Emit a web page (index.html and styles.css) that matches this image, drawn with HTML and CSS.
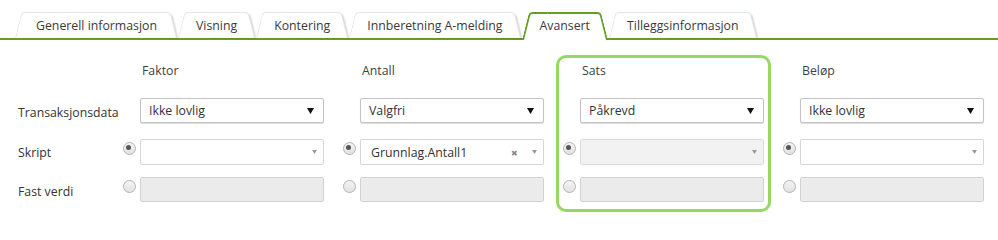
FILE: index.html
```html
<!DOCTYPE html>
<html lang="no">
<head>
<meta charset="utf-8">
<title>Avansert</title>
<link rel="stylesheet" href="styles.css">
</head>
<body>
<div class="tabs">
  <div class="tab">Generell informasjon</div>
  <div class="tab">Visning</div>
  <div class="tab">Kontering</div>
  <div class="tab">Innberetning A-melding</div>
  <div class="tab active">Avansert</div>
  <div class="tab">Tilleggsinformasjon</div>
</div>

<div class="form">
  <div class="labels">
    <div class="head"></div>
    <div class="lbl r1">Transaksjonsdata</div>
    <div class="lbl r2">Skript</div>
    <div class="lbl r3">Fast verdi</div>
  </div>

  <div class="col">
    <div class="head">Faktor</div>
    <div class="row r1"><span class="rspace"></span><div class="dd"><span>Ikke lovlig</span><svg class="caret" viewBox="0 0 7 6" width="7" height="6"><path d="M0 0H7L3.5 6Z"/></svg></div></div>
    <div class="row r2"><span class="radio on"></span><div class="combo"><span></span><svg class="scaret" viewBox="0 0 5 4" width="5" height="4"><path d="M0 0H5L2.5 4Z"/></svg></div></div>
    <div class="row r3"><span class="radio"></span><div class="fixed"></div></div>
  </div>

  <div class="col">
    <div class="head">Antall</div>
    <div class="row r1"><span class="rspace"></span><div class="dd"><span>Valgfri</span><svg class="caret" viewBox="0 0 7 6" width="7" height="6"><path d="M0 0H7L3.5 6Z"/></svg></div></div>
    <div class="row r2"><span class="radio on"></span><div class="combo filled"><span>Grunnlag.Antall1</span><span class="clear">&#x2716;</span><svg class="scaret" viewBox="0 0 5 4" width="5" height="4"><path d="M0 0H5L2.5 4Z"/></svg></div></div>
    <div class="row r3"><span class="radio"></span><div class="fixed"></div></div>
  </div>

  <div class="col highlight">
    <div class="head">Sats</div>
    <div class="row r1"><span class="rspace"></span><div class="dd"><span>Påkrevd</span><svg class="caret" viewBox="0 0 7 6" width="7" height="6"><path d="M0 0H7L3.5 6Z"/></svg></div></div>
    <div class="row r2"><span class="radio on"></span><div class="combo disabled"><span></span><svg class="scaret" viewBox="0 0 5 4" width="5" height="4"><path d="M0 0H5L2.5 4Z"/></svg></div></div>
    <div class="row r3"><span class="radio"></span><div class="fixed"></div></div>
  </div>

  <div class="col">
    <div class="head">Beløp</div>
    <div class="row r1"><span class="rspace"></span><div class="dd"><span>Ikke lovlig</span><svg class="caret" viewBox="0 0 7 6" width="7" height="6"><path d="M0 0H7L3.5 6Z"/></svg></div></div>
    <div class="row r2"><span class="radio on"></span><div class="combo"><span></span><svg class="scaret" viewBox="0 0 5 4" width="5" height="4"><path d="M0 0H5L2.5 4Z"/></svg></div></div>
    <div class="row r3"><span class="radio"></span><div class="fixed"></div></div>
  </div>
</div>
</body>
</html>
```

FILE: styles.css
```css
* { box-sizing: border-box; }

html, body {
  margin: 0;
  padding: 0;
  background: #fff;
}

body {
  font-family: "Open Sans", "Liberation Sans", sans-serif;
  font-size: 12.3px;
  color: #333;
  width: 998px;
  height: 219px;
  overflow: hidden;
}

/* ---------- tabs ---------- */
.tabs {
  display: flex;
  align-items: flex-end;
  gap: 1px;
  padding: 12px 0 0 15px;
  border-bottom: 2px solid #62a024;
}

.tab {
  position: relative;
  z-index: 0;
  flex: none;
  height: 26px;
  padding: 0 18px;
  display: flex;
  align-items: center;
  color: #3a3a3a;
  white-space: nowrap;
}

.tab:first-child { padding: 0 20px 0 21px; }

.tab::before,
.tab::after {
  content: "";
  position: absolute;
  top: 0;
  bottom: 0;
  width: 60%;
  background: #fff;
  border-top: 1px solid #dfe5ec;
  z-index: -1;
}

.tab::before {
  left: 0;
  border-left: 1px solid #dfe5ec;
  border-top-left-radius: 4px;
  transform: skewX(-14deg);
  transform-origin: bottom left;
}

.tab::after {
  right: 0;
  border-right: 1px solid #dfe5ec;
  border-top-right-radius: 4px;
  transform: skewX(14deg);
  transform-origin: bottom right;
  box-shadow: 2px 1px 2px -1px rgba(0, 0, 0, 0.18);
}

.tab.active {
  height: 28px;
  margin-bottom: -2px;
  padding-bottom: 2px;
  z-index: 1;
}

.tab.active::before,
.tab.active::after {
  border-color: #62a024;
  border-top-width: 2px;
  box-shadow: none;
}

.tab.active::before { border-left-width: 2px; }
.tab.active::after { border-right-width: 2px; }

/* ---------- form ---------- */
.form {
  display: flex;
  padding: 22px 0 0 18px;
}

.labels {
  flex: 0 0 105px;
}

.col {
  flex: 0 0 201px;
  margin-right: 19px;
  padding-bottom: 3px;
}

.col:last-child { margin-right: 0; }

.col.highlight {
  outline: 3px solid #95d964;
  outline-offset: 4px;
  border-radius: 3px;
}

.head {
  height: 36px;
  padding: 1px 0 0 19px;
  line-height: 16px;
  color: #3f3f3f;
}

.labels .head { padding: 0; }

.r1 { height: 25px; }
.r2 { height: 26px; margin-top: 16px; }
.r3 { height: 25px; margin-top: 12px; }

.lbl {
  display: flex;
  align-items: center;
  padding-top: 3px;
}

.lbl.r2 { padding-top: 0; }

.row {
  display: flex;
  align-items: flex-start;
}

.rspace,
.radio {
  flex: 0 0 17px;
}

.radio {
  position: relative;
  height: 11px;
  margin-top: 3px;
}

.radio::before {
  content: "";
  position: absolute;
  left: 0;
  top: 0;
  width: 11px;
  height: 11px;
  border-radius: 50%;
  border: 1px solid #b3b3b3;
  background: linear-gradient(#f4f4f4, #e2e2e2);
}

.radio.on::after {
  content: "";
  position: absolute;
  left: 3px;
  top: 3px;
  width: 5px;
  height: 5px;
  border-radius: 50%;
  background: #555;
}

.dd,
.combo,
.fixed {
  flex: 0 0 184px;
  height: 100%;
  border-radius: 2px;
}

.dd {
  display: flex;
  align-items: center;
  justify-content: space-between;
  padding: 0 9px 0 8px;
  border: 1px solid #c4c4c4;
  background: #fff;
  box-shadow: 0 1px 1px rgba(0, 0, 0, 0.14);
  color: #333;
}

.caret { fill: #111; }

.combo {
  display: flex;
  align-items: center;
  padding: 0 6px 0 10px;
  border: 1px solid #d6d6d6;
  background: #fff;
  color: #333;
}

.combo > span:first-child { flex: 1; }

.combo.disabled {
  background: #f2f2f2;
  border-color: #dcdcdc;
}

.clear {
  font-size: 8px;
  color: #8a8a8a;
  margin-right: 14px;
}

.scaret { fill: #9a9a9a; }

.fixed {
  border: 1px solid #d2d2d2;
  background: #ebebeb;
}
```
